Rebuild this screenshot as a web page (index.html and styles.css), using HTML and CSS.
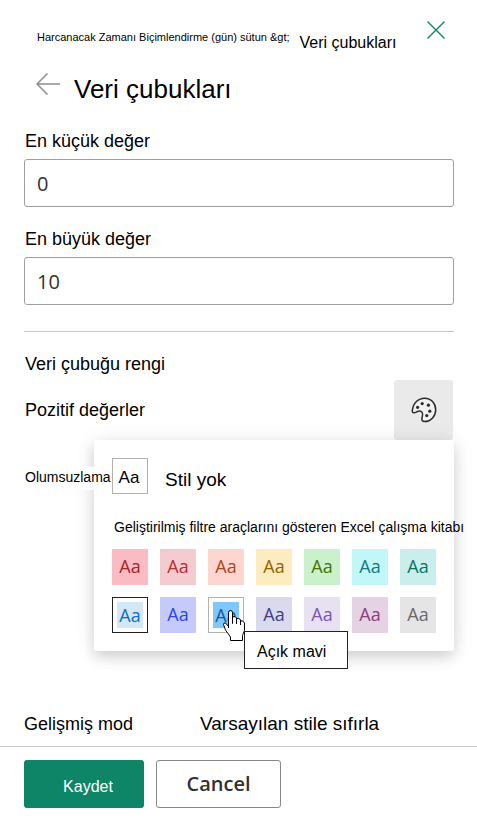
FILE: index.html
```html
<!DOCTYPE html>
<html lang="tr">
<head>
<meta charset="utf-8">
<meta name="viewport" content="width=device-width, initial-scale=1">
<title>Veri çubukları</title>
<link rel="stylesheet" href="styles.css">
</head>
<body>
<form class="panel">
  <header class="topbar">
    <nav class="breadcrumb">
      <a class="crumb-parent" href="#">Harcanacak Zamanı Biçimlendirme (gün) sütun &amp;gt;</a>
      <span class="crumb-current">Veri çubukları</span>
    </nav>
    <button class="icon-button close" type="button" aria-label="Kapat">
      <svg width="18" height="18" viewBox="0 0 18 18"><path d="M0.5 0.5L17.5 17.5M17.5 0.5L0.5 17.5" fill="none" stroke="#0f8567" stroke-width="1.4"/></svg>
    </button>
  </header>

  <div class="title-row">
    <button class="icon-button" type="button" aria-label="Geri">
      <svg width="24" height="22" viewBox="0 0 24 22"><path d="M11.5 0.5L1 11L11.5 21.5M1 11H24" fill="none" stroke="#8f8b88" stroke-width="1.5"/></svg>
    </button>
    <h1 class="title">Veri çubukları</h1>
  </div>

  <main class="content">
    <div class="field">
      <label class="label" for="min">En küçük değer</label>
      <input class="input" id="min" type="text" value="0">
    </div>
    <div class="field">
      <label class="label" for="max">En büyük değer</label>
      <input class="input" id="max" type="text" value="10">
    </div>

    <section class="colors">
      <h2 class="label">Veri çubuğu rengi</h2>
      <div class="color-row">
        <span class="label">Pozitif değerler</span>
        <button class="palette-button" type="button" aria-label="Renk seç">
          <svg width="26" height="26" viewBox="0 0 26 26">
            <path d="M1.3 13.8C2 6 7.5 1.2 13.6 1.2C20 1.2 24.7 6.3 24.7 12.8C24.7 19.4 19.6 24.6 13.8 24.6C10.9 24.6 10.4 22.7 11.1 20.6C11.7 18.7 12.3 17.2 11.1 15.4C9.8 13.5 7.8 13.6 6.2 14.7C4.2 16.1 1 16.3 1.3 13.8Z" fill="#f1f1f1" stroke="#2b2b2b" stroke-width="1.5"/>
            <g fill="#2b2b2b"><circle cx="6.6" cy="10.3" r="1.6"/><circle cx="11.2" cy="6.6" r="1.6"/><circle cx="17.4" cy="8.2" r="1.6"/><circle cx="18.8" cy="14.2" r="1.6"/><circle cx="15.8" cy="18.6" r="1.6"/></g>
          </svg>
        </button>
        <div class="popover">
          <div class="no-style">
            <button class="swatch plain" type="button" aria-labelledby="none-name">Aa</button>
            <span class="no-style-name" id="none-name">Stil yok</span>
          </div>
          <p class="group-name">Geliştirilmiş filtre araçlarını gösteren Excel çalışma kitabı</p>
          <div class="swatches">
            <button class="swatch rose" type="button">Aa</button>
            <button class="swatch pink" type="button">Aa</button>
            <button class="swatch peach" type="button">Aa</button>
            <button class="swatch gold" type="button">Aa</button>
            <button class="swatch green" type="button">Aa</button>
            <button class="swatch cyan" type="button">Aa</button>
            <button class="swatch teal" type="button">Aa</button>
            <button class="swatch framed selected sky" type="button">Aa</button>
            <button class="swatch blue" type="button">Aa</button>
            <div class="hover-cell">
              <button class="swatch framed azure" type="button" aria-describedby="tip">Aa</button>
              <div class="tooltip" id="tip" role="tooltip">Açık mavi</div>
              <svg class="pointer" width="22" height="31" viewBox="0 0 22 31"><path d="M5.5 18V2.5Q5.5 0.5 7.5 0.5T9.5 2.5V13.5V8Q9.5 6.5 11 6.5T13.5 8V14V9.5Q13.5 8 15.5 8.5T17.5 10V15V12Q17.5 10.5 19 10.8T21.5 13V20.5L19.5 25.5V30.5H7.5V27L2.5 20L0.5 14.5Q0.5 12.5 2.5 13L5.5 16.5Z" fill="#fff" stroke="#000"/></svg>
            </div>
            <button class="swatch indigo" type="button">Aa</button>
            <button class="swatch lavender" type="button">Aa</button>
            <button class="swatch plum" type="button">Aa</button>
            <button class="swatch gray" type="button">Aa</button>
          </div>
        </div>
      </div>
      <span class="negative">Olumsuzlama</span>
    </section>
  </main>

  <div class="links">
    <a href="#">Gelişmiş mod</a>
    <a class="reset" href="#">Varsayılan stile sıfırla</a>
  </div>
  <footer class="footer">
    <button class="button save" type="submit">Kaydet</button>
    <button class="button cancel" type="button">Cancel</button>
  </footer>
</form>
</body>
</html>
```
FILE: styles.css
```css
* {
  box-sizing: border-box;
}

body {
  margin: 0;
  background: #fff;
  color: #000;
  font-family: "Liberation Sans", Arial, sans-serif;
  font-size: 18px;
  line-height: 20px;
}

h1, h2, p {
  margin: 0;
  font-weight: 400;
}

a {
  color: inherit;
  text-decoration: none;
}

button, input {
  font: inherit;
  color: inherit;
}

button {
  padding: 0;
  border: 0;
  background: none;
}

svg {
  display: block;
}

.panel {
  display: flex;
  flex-direction: column;
  min-height: 100vh;
}

.topbar {
  display: flex;
  justify-content: space-between;
  align-items: flex-start;
  padding: 20px 32px 0 37px;
}

.breadcrumb {
  display: flex;
  gap: 10px;
  white-space: nowrap;
}

.crumb-parent {
  padding-top: 7px;
  font-size: 11px;
}

.crumb-current {
  padding-top: 13px;
  font-size: 16px;
}

.icon-button {
  flex: none;
}

.close {
  padding-top: 1px;
}

.title-row {
  display: flex;
  align-items: flex-start;
  gap: 14px;
  padding: 20px 24px 0 36px;
}

.title {
  padding-top: 2px;
  font-size: 26px;
  line-height: 28px;
}

.content {
  padding: 28px 23px 0 24px;
}

.field {
  display: flex;
  flex-direction: column;
  gap: 8px;
  margin-bottom: 22px;
}

.label {
  padding-left: 1px;
  font-size: 18px;
}

.input {
  width: 100%;
  height: 48px;
  padding: 0 12px;
  border: 1px solid #a19f9d;
  border-radius: 3px;
  background: #fff;
  color: #323130;
  font-family: "Open Sans", "Noto Sans", sans-serif;
  font-size: 20px;
}

.colors {
  margin-top: 26px;
  padding-top: 22px;
  border-top: 1px solid #c8c6c4;
}

.color-row {
  position: relative;
  display: flex;
  justify-content: space-between;
  align-items: center;
  margin-top: 6px;
}

.palette-button {
  display: grid;
  place-items: center;
  width: 59px;
  height: 60px;
  margin-right: 1px;
  border-radius: 3px;
  background: #eaeaea;
}

.popover {
  position: absolute;
  top: 100%;
  right: 0;
  z-index: 1;
  width: 360px;
  padding: 18px;
  border-radius: 2px;
  background: #fff;
  box-shadow: 0 6px 14px rgba(0, 0, 0, 0.15), 0 1px 24px rgba(0, 0, 0, 0.07);
}

.no-style {
  display: flex;
  align-items: center;
  gap: 17px;
}

.no-style-name {
  padding-top: 8px;
  font-size: 19px;
}

.group-name {
  margin: 23px 0 12px;
  padding-left: 2px;
  font-size: 14px;
  white-space: nowrap;
}

.swatches {
  display: grid;
  grid-template-columns: repeat(7, 36px);
  gap: 12px;
}

.swatch {
  width: 36px;
  height: 36px;
  padding-bottom: 2px;
  font-family: "Open Sans", "Noto Sans", sans-serif;
  font-size: 18px;
  text-align: center;
}

.plain {
  padding: 4px 2px 0 0;
  border: 1px solid #b3b0ad;
  font-family: inherit;
  font-size: 17px;
}

.framed {
  padding: 4px;
  border: 1px solid #b3b0ad;
  background-clip: content-box;
  line-height: 24px;
}

.selected {
  border-color: #222;
}

.rose { background-color: #fabbc3; color: #a4262c; }
.pink { background-color: #f4cccf; color: #b52e36; }
.peach { background-color: #ffd5d1; color: #a8471c; }
.gold { background-color: #ffebc0; color: #8f6500; }
.green { background-color: #caf0cc; color: #437406; }
.cyan { background-color: #c2f7f8; color: #117a80; }
.teal { background-color: #caeeeb; color: #0b7564; }
.sky { background-color: #d4e7f6; color: #106ebe; }
.blue { background-color: #c4cbfa; color: #2b46e0; }
.azure { background-color: #80c6ff; color: #175a91; }
.indigo { background-color: #d9daee; color: #403e86; }
.lavender { background-color: #e7e1f2; color: #7a55b3; }
.plum { background-color: #e5d3e3; color: #8b3f7d; }
.gray { background-color: #e5e5e5; color: #69696b; }

.hover-cell {
  position: relative;
}

.tooltip {
  position: absolute;
  top: 34px;
  left: 36px;
  padding: 10px 21px 6px 12px;
  border: 1px solid #222;
  background: #fff;
  font-size: 16px;
  white-space: nowrap;
}

.pointer {
  position: absolute;
  top: 13px;
  left: 15px;
}

.negative {
  position: relative;
  z-index: 2;
  display: inline-block;
  margin-top: 27px;
  padding: 0 1px 3px;
  background: #fff;
  font-size: 14px;
}

.links {
  display: flex;
  gap: 67px;
  margin-top: auto;
  padding: 24px 24px 12px;
}

.reset {
  font-size: 19px;
}

.footer {
  display: flex;
  gap: 12px;
  padding: 13px 24px 10px;
  border-top: 1px solid #c8c6c4;
}

.button {
  height: 48px;
  border-radius: 3px;
}

.save {
  width: 120px;
  padding: 5px 0 0 8px;
  background: #0f8567;
  color: #fff;
  font-size: 16px;
}

.cancel {
  width: 125px;
  border: 1px solid #8a8886;
  background: #fff;
  color: #323130;
  font-family: "Open Sans", "Noto Sans", sans-serif;
  font-size: 20px;
  font-weight: 600;
}
```
